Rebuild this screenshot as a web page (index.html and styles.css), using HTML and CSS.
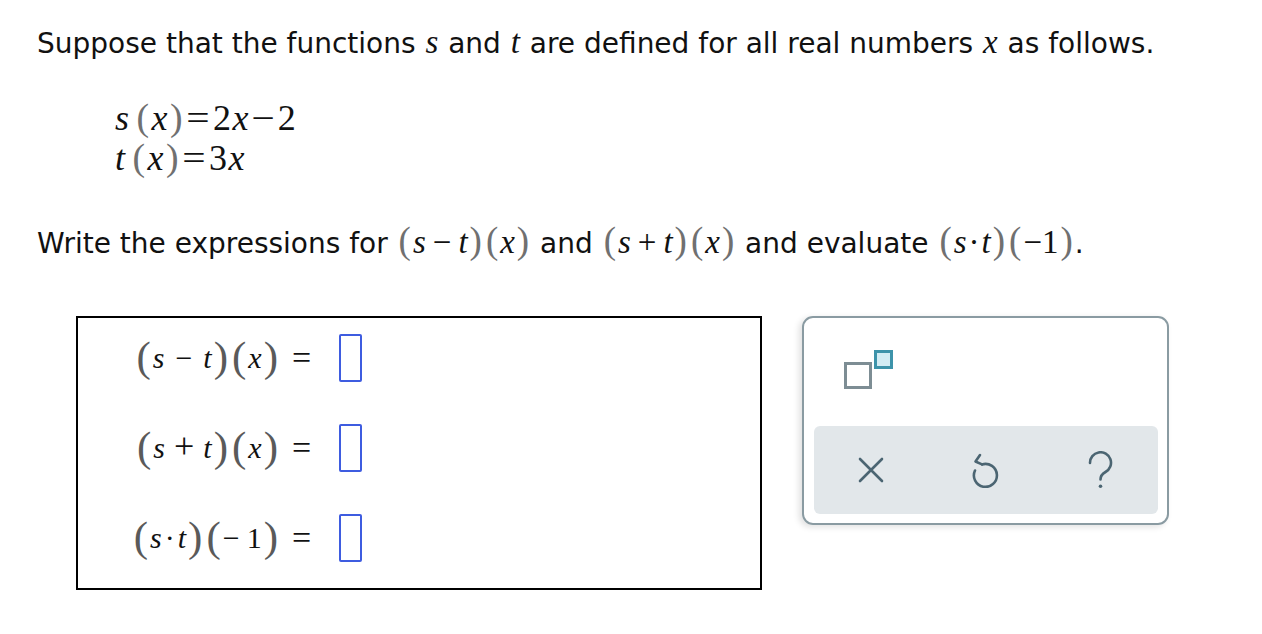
FILE: index.html
```html
<!DOCTYPE html>
<html>
<head>
<meta charset="utf-8">
<link rel="stylesheet" href="styles.css">
</head>
<body>
<div class="page">
  <p class="line intro">Suppose that the functions <i class="m">s</i> and <i class="m">t</i> are defined for all real numbers <i class="m">x</i> as follows.</p>
  <div class="defs">
    <div class="def"><i class="v">s</i><span class="p">(</span><i>x</i><span class="p">)</span><span class="op">=</span>2<i>x</i><span class="op">−</span>2</div>
    <div class="def"><i class="v">t</i><span class="p">(</span><i>x</i><span class="p">)</span><span class="op">=</span>3<i>x</i></div>
  </div>
  <p class="line prompt">Write the expressions for <span class="mi"><span class="p">(</span><i>s</i><span class="op">−</span><i>t</i><span class="p">)</span><span class="p">(</span><i>x</i><span class="p">)</span></span> and <span class="mi"><span class="p">(</span><i>s</i><span class="op">+</span><i>t</i><span class="p">)</span><span class="p">(</span><i>x</i><span class="p">)</span></span> and evaluate <span class="mi"><span class="p">(</span><i>s</i><span class="dot">·</span><i>t</i><span class="p">)</span><span class="p">(</span>−1<span class="p">)</span></span>.</p>

  <div class="work">
    <div class="answers">
      <div class="row">
        <div class="expr"><span class="bp">(</span><i>s</i><span class="sop">−</span><i>t</i><span class="bp">)</span><span class="bp">(</span><i>x</i><span class="bp">)</span></div>
        <div class="eq">=</div>
        <div class="blank"></div>
      </div>
      <div class="row">
        <div class="expr"><span class="bp">(</span><i>s</i><span class="sop plus">+</span><i>t</i><span class="bp">)</span><span class="bp">(</span><i>x</i><span class="bp">)</span></div>
        <div class="eq">=</div>
        <div class="blank"></div>
      </div>
      <div class="row">
        <div class="expr"><span class="bp">(</span><i>s</i><span class="sdot">·</span><i>t</i><span class="bp">)</span><span class="bp">(</span><span class="neg">−</span>1<span class="bp">)</span></div>
        <div class="eq">=</div>
        <div class="blank"></div>
      </div>
    </div>

    <div class="tools">
      <div class="tool-top">
        <svg class="sup" width="52" height="42" viewBox="0 0 52 42">
          <rect x="1.5" y="13.5" width="25" height="24" fill="#fff" stroke="#7d8d94" stroke-width="3"/>
          <rect x="31.5" y="1.5" width="16" height="16" fill="#d2ecf4" stroke="#3d93aa" stroke-width="3"/>
        </svg>
      </div>
      <div class="tool-bar">
        <button class="tb">
          <svg width="26" height="26" viewBox="0 0 26 26"><path d="M2 2 L24 24 M24 2 L2 24" stroke="#4b6572" stroke-width="2.6" stroke-linecap="round" fill="none"/></svg>
        </button>
        <button class="tb">
          <svg width="28" height="36" viewBox="0 0 28 36"><path d="M10 12.4 A11.5 11.5 0 1 1 3 18.5" stroke="#4b6572" stroke-width="2.6" stroke-linecap="round" fill="none"/><path d="M8 3 L3.5 9.5 L10 12.4" stroke="#4b6572" stroke-width="2.6" stroke-linecap="round" stroke-linejoin="round" fill="none"/></svg>
        </button>
        <button class="tb">
          <svg width="26" height="38" viewBox="0 0 26 38"><path d="M2 12 A10.5 10.5 0 1 1 17.5 21 C14 23 12.5 24.5 12.5 28.5" stroke="#4b6572" stroke-width="2.6" stroke-linecap="round" fill="none"/><circle cx="12.5" cy="35.2" r="1.8" fill="#4b6572"/></svg>
        </button>
      </div>
    </div>
  </div>
</div>
</body>
</html>
```
FILE: styles.css
```css
html, body {
  margin: 0;
  padding: 0;
  background: #fff;
}
body {
  font-family: "DejaVu Sans", Verdana, sans-serif;
  color: #111;
}
.page {
  width: 1262px;
  height: 634px;
  overflow: hidden;
}
.line {
  margin: 0;
  padding-left: 37px;
  font-size: 28px;
  line-height: 32px;
  white-space: nowrap;
}
.intro {
  padding-top: 28px;
}
i {
  font-family: "Liberation Serif", "Times New Roman", serif;
  font-style: italic;
}
.m {
  font-size: 33px;
  line-height: 0;
  padding: 0 1px;
}
.mi {
  font-family: "Liberation Serif", "Times New Roman", serif;
  font-size: 33px;
  line-height: 0;
}
.p {
  color: #707070;
  font-family: "Liberation Serif", serif;
  font-style: normal;
  font-size: 1.12em;
  line-height: 0;
  padding: 0 2px;
}
.mi .op {
  padding: 0 7px;
}
.mi .dot {
  padding: 0 2px;
}

/* definitions */
.defs {
  padding-left: 115px;
  padding-top: 38px;
  font-family: "Liberation Serif", "Times New Roman", serif;
  font-size: 36px;
  line-height: 40px;
  white-space: nowrap;
  letter-spacing: 1.5px;
}
.def .v {
  margin-right: 5px;
}
.def .p {
  font-size: 1.05em;
  padding: 0 1px;
}
.def .op {
  display: inline-block;
  transform: scaleX(1.15);
  padding: 0 3px;
}

.prompt {
  padding-top: 50px;
}

/* work area */
.work {
  display: flex;
  align-items: flex-start;
  padding-top: 56px;
}
.answers {
  margin-left: 76px;
  width: 686px;
  height: 274px;
  box-sizing: border-box;
  border: 2px solid #000;
  padding-top: 16px;
  display: flex;
  flex-direction: column;
  gap: 42px;
}
.row {
  display: flex;
  align-items: center;
  height: 48px;
  font-family: "Liberation Serif", "Times New Roman", serif;
  font-size: 30px;
  line-height: 48px;
}
.expr {
  width: 202px;
  text-align: right;
  white-space: nowrap;
  color: #111;
}
.bp {
  color: #5a5a5a;
  font-size: 43px;
  line-height: 0;
  vertical-align: -3px;
  padding: 0 2px;
}
.sop {
  padding: 0 11px;
}
.sop.plus {
  font-size: 36px;
  line-height: 0;
  padding: 0 9px;
}
.sdot {
  padding: 0 3px;
}
.neg {
  padding-right: 7px;
}
.eq {
  margin-left: 12px;
  width: 22px;
  font-size: 34px;
  line-height: 0;
}
.blank {
  margin-left: 25px;
  width: 23px;
  height: 48px;
  box-sizing: border-box;
  border: 2px solid #3e5ce0;
  border-radius: 2px;
}

/* tools */
.tools {
  margin-left: 40px;
  width: 367px;
  height: 209px;
  box-sizing: border-box;
  border: 2px solid #8a9ba2;
  border-radius: 11px;
  box-shadow: -3px 2px 6px rgba(0, 0, 0, 0.12);
  display: flex;
  flex-direction: column;
  padding: 0 9px 9px 10px;
}
.tool-top {
  height: 108px;
  padding: 32px 0 0 30px;
  box-sizing: border-box;
}
.sup {
  display: block;
}
.tool-bar {
  flex: 1;
  background: #e2e7ea;
  border-radius: 6px;
  display: flex;
  justify-content: space-around;
  align-items: center;
}
.tb {
  border: 0;
  background: transparent;
  padding: 0;
  width: 40px;
  height: 40px;
  display: flex;
  align-items: center;
  justify-content: center;
}
.tb svg {
  display: block;
}
```
